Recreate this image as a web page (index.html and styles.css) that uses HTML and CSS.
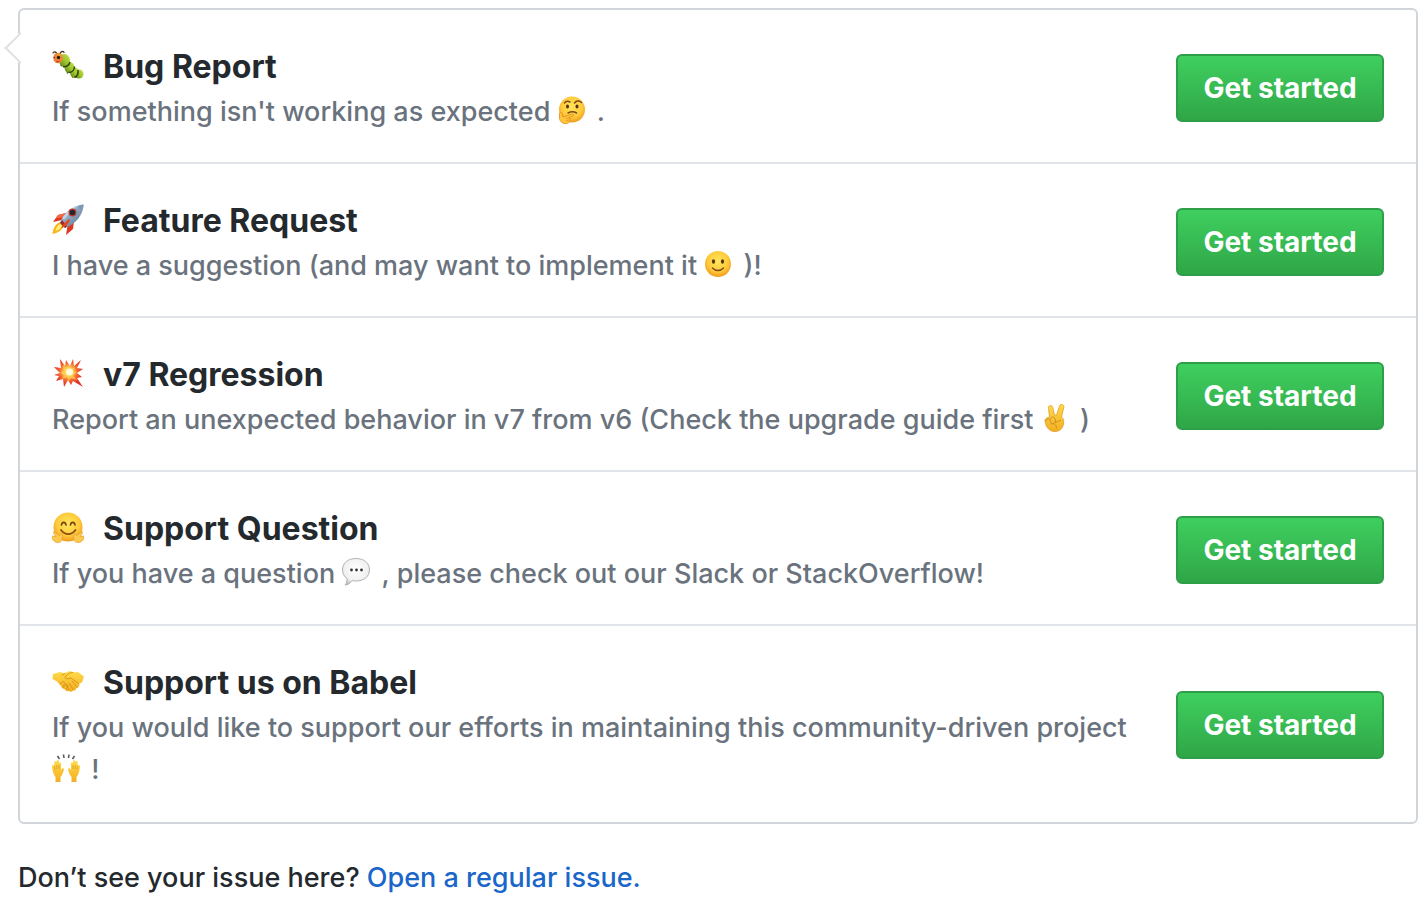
FILE: index.html
```html
<!DOCTYPE html>
<html lang="en">
<head>
    <meta charset="UTF-8">
    <meta name="viewport" content="width=device-width, initial-scale=1.0">
    <title>New Issue</title>
    <link rel="stylesheet" href="styles.css">
</head>
<body>
    <svg class="defs" aria-hidden="true">
        <defs>
            <radialGradient id="face" cx=".5" cy=".4" r=".6">
                <stop offset="0" stop-color="#ffe65c"/><stop offset=".65" stop-color="#ffcb3c"/><stop offset="1" stop-color="#f09a1e"/>
            </radialGradient>
            <linearGradient id="skin" x1="0" y1="0" x2="0" y2="1">
                <stop offset="0" stop-color="#ffdb4a"/><stop offset="1" stop-color="#f3ae22"/>
            </linearGradient>
            <linearGradient id="worm" x1="1" y1="0" x2="0" y2="1">
                <stop offset="0" stop-color="#c6e04c"/><stop offset=".5" stop-color="#9cc62c"/><stop offset="1" stop-color="#587c14"/>
            </linearGradient>
            <linearGradient id="hull" x1="0" y1="0" x2="1" y2="1">
                <stop offset="0" stop-color="#b9cbdc"/><stop offset=".5" stop-color="#8aa3bd"/><stop offset="1" stop-color="#4c6584"/>
            </linearGradient>
            <radialGradient id="blast" cx=".5" cy=".45" r=".5">
                <stop offset="0" stop-color="#fffbd0"/><stop offset=".3" stop-color="#ffc94d"/><stop offset=".65" stop-color="#f4622f"/><stop offset="1" stop-color="#dd3328"/>
            </radialGradient>
            <radialGradient id="bubble" cx=".5" cy=".4" r=".6">
                <stop offset="0" stop-color="#fff"/><stop offset=".75" stop-color="#f0f0f0"/><stop offset="1" stop-color="#c4c4c4"/>
            </radialGradient>
        </defs>
    </svg>

    <main class="page">
        <ul class="templates">
            <li class="template">
                <div class="info">
                    <h2 class="title">
                        <svg class="icon" viewBox="0 0 32 32" role="img" aria-label="bug">
                            <path d="M5 4C4 1.500 2 1.500 1 3M8 3.500C9 1 11.500 1 12 2.500" fill="none" stroke="#4a3b20" stroke-width="1.300" stroke-linecap="round"/>
                            <path d="M8 13l1 4 2-3M14 19l1 5 3-3M21 24l-1 4 4-2" fill="#3d4c16"/>
                            <ellipse cx="27" cy="24" rx="4.500" ry="4.500" fill="url(#worm)"/>
                            <ellipse cx="22.500" cy="22.500" rx="4.500" ry="5.200" fill="url(#worm)"/>
                            <ellipse cx="17.500" cy="17.500" rx="5" ry="5.500" fill="url(#worm)"/>
                            <ellipse cx="12.500" cy="10.500" rx="5.500" ry="6.500" fill="url(#worm)"/>
                            <path d="M11 16.500c3 1 6-1 7-4.500M16.500 22.500c3.500 0 6-2.500 6-6M22.500 27.500c2.500-1 4-4 3.500-7.500" fill="none" stroke="#2f400e" stroke-width="1.500"/>
                            <ellipse cx="6" cy="8" rx="4.800" ry="5.200" fill="#f3813a"/>
                            <path d="M4 4.500c3-2 6.500-1 7.500 2l-3 .5z" fill="#dca535"/>
                            <circle cx="6.500" cy="7.500" r="1.700" fill="#27170d"/><circle cx="2.300" cy="7.500" r=".7" fill="#5d2814"/>
                            <path d="M4 11c1 1 2.500 1 3.500 0" fill="none" stroke="#a63e1c"/>
                        </svg>
                        Bug Report
                    </h2>
                    <p class="about">If something isn't working as expected
                        <svg class="emoji" viewBox="0 0 28 28" role="img" aria-label="thinking">
                            <circle cx="14" cy="13.500" r="13" fill="url(#face)"/>
                            <path d="M6.500 7c1.500-2 3.500-2 5.500-1M16.500 7c2-2.500 5-2.500 7-.5" fill="none" stroke="#7b4a16" stroke-width="1.500" stroke-linecap="round"/>
                            <ellipse cx="9.500" cy="10.500" rx="1.500" ry="2" fill="#57300f"/><ellipse cx="19" cy="10.500" rx="1.500" ry="2" fill="#57300f"/>
                            <path d="M10 17c3-1.500 6-1.500 8.500 0" fill="none" stroke="#7b4a16" stroke-width="1.500" stroke-linecap="round"/>
                            <path d="M1.500 18c0-2 2.500-2 2.500 0l1 3 9-3c2-.5 2.500 1.500 1 2l-4 1.500c2 2 1 5.500-2.500 6-4 .5-6.500-2-7-5z" fill="#ffc53b" stroke="#dc8a20" stroke-width=".8"/>
                            <path d="M8 22.500l4-1M8 24.500l3.500-.5" stroke="#dc8a20" stroke-width=".7"/>
                        </svg>
                        .</p>
                </div>
                <button class="btn" type="button">Get started</button>
            </li>
            <li class="template">
                <div class="info">
                    <h2 class="title">
                        <svg class="icon" viewBox="0 0 32 32" role="img" aria-label="rocket">
                            <path d="M8 18c-5 2-7 7-7.500 12C6 29 10 26 12 22z" fill="#f8b51d"/>
                            <path d="M8 20c-3 2-4 4-4.500 7 3-1 5-2 6.500-5z" fill="#fff07a"/>
                            <path d="M14 9L6 11 1 18l9-2zM22 17l-1 8-7 6 1.500-9z" fill="#df3622"/>
                            <path d="M14 9L6 11l-2.500 3.500L12 13z" fill="#f36a42"/>
                            <path d="M8 19C11 9 20 2 31.500.500 31 11 24 20 13 24z" fill="url(#hull)"/>
                            <path d="M26 2c2-.8 4-1.300 5.500-1.500C31.500 3 31 5 30 7z" fill="#7e97ae"/>
                            <path d="M10 15C14 7 20 4 26 2c-5 4-10 8-13 13z" fill="#dbe7ef" opacity=".65"/>
                            <path d="M8 19l5 5 2-2-5-6z" fill="#9b2c28"/>
                            <circle cx="20.500" cy="8.500" r="4" fill="#bd3933"/><circle cx="20.500" cy="8.500" r="2.700" fill="#26252d"/>
                            <path d="M17 15c-3 2-6 5-8 9 4-1 8-4 9-8z" fill="#e04a26"/>
                        </svg>
                        Feature Request
                    </h2>
                    <p class="about">I have a suggestion (and may want to implement it
                        <svg class="emoji" viewBox="0 0 28 28" role="img" aria-label="slight smile">
                            <circle cx="14" cy="14" r="13" fill="url(#face)"/>
                            <ellipse cx="9.500" cy="11.500" rx="1.600" ry="2.300" fill="#5c3410"/><ellipse cx="18.500" cy="11.500" rx="1.600" ry="2.300" fill="#5c3410"/>
                            <path d="M8.500 18c3 3.300 8 3.300 11 0" fill="none" stroke="#7b4a16" stroke-width="1.400" stroke-linecap="round"/>
                        </svg>
                        )!</p>
                </div>
                <button class="btn" type="button">Get started</button>
            </li>
            <li class="template">
                <div class="info">
                    <h2 class="title">
                        <svg class="icon" viewBox="0 0 32 32" role="img" aria-label="boom">
                            <path d="M8 1l5 7 1-6 4 6 3-7 1 7 7-6-4 8 6 1-6 4 5 4-5 1 6 9-10-6-2 4-3-5-4 7-1-8-7 2 3-5-5-1 6-2-6-6 7 1z" fill="url(#blast)"/>
                            <path d="M11 7l4 4 2-3 2 3 4-2-2 4 4 1-4 3 4 5-6-2-2 3-2-4-5 2 2-4-4-2 4-2z" fill="#ffd557" opacity=".65"/>
                            <circle cx="17.500" cy="14" r="3.500" fill="#fffbe0"/>
                        </svg>
                        v7 Regression
                    </h2>
                    <p class="about">Report an unexpected behavior in v7 from v6 (Check the upgrade guide first
                        <svg class="emoji" viewBox="0 0 28 28" role="img" aria-label="victory hand">
                            <path d="M8.500 13L7.500 4.500C7 1 11 .5 11.700 3.500L13.500 11l2 .2L18.500 2c1-2.800 5-1.500 4.300 1.200L20.500 13c2 1 2.500 4 2 7-.6 4-3.500 7.500-8.500 7.500-4.500 0-7.500-2.500-9-6.500L4 17c-.5-2 2-3.500 4.500-4z" fill="url(#skin)" stroke="#e09c24" stroke-width=".8"/>
                            <path d="M5 17c0-3 4-3 4.500 0l1 3M9.500 15c.5-3 4-2.500 4.500 0l.5 3M11 20c3-1 5-3 8.500-3.500M13 20c2 1 2.500 2 2.500 4" fill="none" stroke="#cc8a20" stroke-width=".9" stroke-linecap="round"/>
                        </svg>
                        )</p>
                </div>
                <button class="btn" type="button">Get started</button>
            </li>
            <li class="template">
                <div class="info">
                    <h2 class="title">
                        <svg class="icon" viewBox="0 0 32 32" role="img" aria-label="hugging">
                            <circle cx="16" cy="15" r="14.500" fill="url(#face)"/>
                            <path d="M9.500 13c.5-3.500 4-3.500 4.500 0M18.500 13c.5-3.500 4-3.500 4.500 0" fill="none" stroke="#79450f" stroke-width="1.700" stroke-linecap="round"/>
                            <path d="M9 18c4 5.500 10.500 5.500 14.500 0" fill="none" stroke="#8a4c15" stroke-width="1.800" stroke-linecap="round"/>
                            <path d="M1 24l3 .5L1.500 21c-.5-1.500 1-1.800 2-.5l4 3c.5-2 3-2 3 .5 0 3.500-.5 6.500-4.500 6.500-3 0-5-2-6-4.500-.5-1.500 0-2 1-2zM31 24l-3 .5 2.500-3.500c.5-1.500-1-1.800-2-.5l-4 3c-.5-2-3-2-3 .5 0 3.500.5 6.500 4.500 6.500 3 0 5-2 6-4.500.5-1.500 0-2-1-2z" fill="#fbca4c" stroke="#e59a2c" stroke-width=".7"/>
                        </svg>
                        Support Question
                    </h2>
                    <p class="about">If you have a question
                        <svg class="emoji" viewBox="0 0 28 28" role="img" aria-label="speech balloon">
                            <path d="M14 .500c8 0 13.500 4.500 13.500 11.300S22 23 14 23c-1.500 0-3-.2-4-.5C8.500 25 6 27 3 27c1.500-1.500 2-3.500 2-6.500C2 18.500.5 15.500.5 11.800.5 5 6 .5 14 .5z" fill="url(#bubble)" stroke="#ababab" stroke-width=".9"/>
                            <circle cx="9.500" cy="12" r="1.400" fill="#333"/><circle cx="14.500" cy="12" r="1.400" fill="#333"/><circle cx="19.500" cy="12" r="1.400" fill="#333"/>
                        </svg>
                        , please check out our Slack or StackOverflow!</p>
                </div>
                <button class="btn" type="button">Get started</button>
            </li>
            <li class="template">
                <div class="info">
                    <h2 class="title">
                        <svg class="icon" viewBox="0 0 32 32" role="img" aria-label="handshake">
                            <path d="M1 8l7-2 5 1.500C15 5 19 4.500 21 6.500l5-.5 6 4.500-2 6-3 1c1 3-1 4.500-2.500 4.500-.5 2-2 3-3.500 2.500-1 1.500-3 1.500-4 .5-2 1-4-.5-4.500-2-2 0-3.500-1.500-3.500-3L5 15.500.500 13z" fill="url(#skin)"/>
                            <path d="M21 6.500c-3 0-5 1-8 4.500-.5 2 2.500 2.500 6 1l8 6M13 7.500L10 9M20 15l5 6M17 17l4 6M14 18l3 6M8 18l3-2.500c2 0 2.500 1.500 1 3l-1 3 3-3c2 0 2.500 1.500 1 3l-1 2" fill="none" stroke="#d78e12" stroke-width=".9" stroke-linecap="round" stroke-linejoin="round"/>
                        </svg>
                        Support us on Babel
                    </h2>
                    <p class="about">If you would like to support our efforts in maintaining this community-driven project
                        <svg class="emoji" viewBox="0 0 28 28" role="img" aria-label="raised hands">
                            <path d="M3.500 28v-5C1 20 .5 17 0 12c0-1.500 1.500-1.500 2 0l.5-4c.3-1.500 2-1.500 2 0L5 7c.5-1.500 2-1 2 .5V9c.5-1 2-.8 2 .7V16c1-2.500 3.500-2 2.800.5C11 19 10 21.500 8.500 23v5zM24.500 28v-5c2.500-3 3-6 3.500-11 0-1.500-1.500-1.500-2 0l-.5-4c-.3-1.500-2-1.500-2 0L23 7c-.5-1.500-2-1-2 .5V9c-.5-1-2-.8-2 .7V16c-1-2.500-3.500-2-2.800.5C17 19 18 21.500 19.500 23v5z" fill="url(#skin)"/>
                            <path d="M2.500 12l.5 4M4.800 11v4M7 11v4M25.500 12l-.5 4M23.200 11v4M21 11v4" stroke="#de981b" stroke-width=".7"/>
                            <path d="M5.500 2l2 3M11.500.500l.5 3.500M17 .500L16.500 4M22.500 2l-2 3" stroke="#555" stroke-width="1.500"/>
                        </svg>
                        !</p>
                </div>
                <button class="btn" type="button">Get started</button>
            </li>
        </ul>
        <p class="footnote">Don’t see your issue here? <a href="#">Open a regular issue.</a></p>
    </main>
</body>
</html>
```
FILE: styles.css
```css
*{margin:0;padding:0;box-sizing:border-box}
body{background:#fff;color:#24292e;font-family:Inter,'Liberation Sans',sans-serif;font-size:27px;font-weight:450;line-height:42px}
.defs{position:absolute;width:0;height:0}
.page{padding:8px 6px 12px 18px}
.templates{position:relative;list-style:none;border:2px solid #d1d5da;border-radius:6px}
/* arrow pointing at the avatar */
.templates::before{content:"";position:absolute;top:27px;left:-11px;width:20px;height:20px;background:#fff;border-left:2px solid #dfe2e5;border-bottom:2px solid #dfe2e5;transform:rotate(45deg)}
.template{display:flex;align-items:center;justify-content:space-between;gap:32px;padding:33px 32px 29px}
.template:last-child{padding-bottom:31px}
.template + .template{border-top:2px solid #e1e4e8}
.info{flex:1}
.title{display:flex;align-items:center;gap:19px;font-size:32px;font-weight:650;line-height:48px}
.icon{width:32px;height:32px;margin-bottom:2px;flex:none}
.about{color:#6a737d}
.emoji{width:28px;height:28px;margin-right:4px;vertical-align:-3px}
.btn{flex:none;width:208px;height:68px;border:2px solid #2f9e48;border-radius:6px;background:linear-gradient(#3fcf5f,#2fa647);color:#fff;font-family:inherit;font-size:28px;font-weight:700;line-height:40px;cursor:pointer}
.btn:hover{background:linear-gradient(#34d058,#269f42)}
.footnote{margin-top:33px}
.footnote a{color:#1b66c9;text-decoration:none}
.footnote a:hover{text-decoration:underline}
```
